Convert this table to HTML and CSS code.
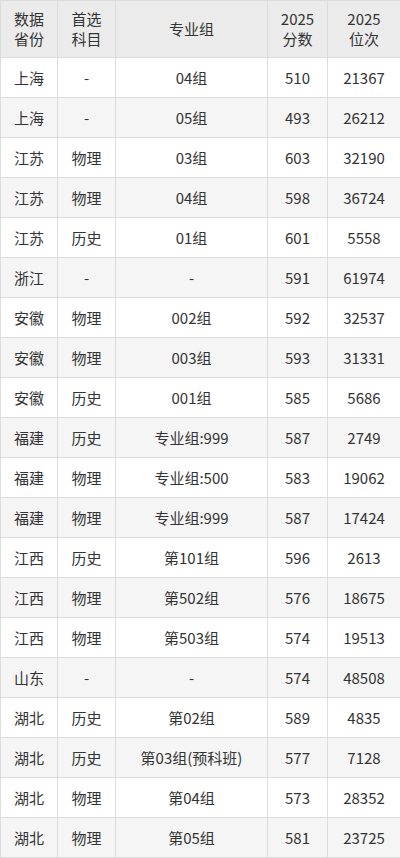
FILE: index.html
```html
<!DOCTYPE html>
<html lang="zh">
<head>
<meta charset="utf-8">
<link rel="stylesheet" href="styles.css">
</head>
<body>
<table class="score-table">
<colgroup>
<col class="c1"><col class="c2"><col class="c3"><col class="c4"><col class="c5">
</colgroup>
<thead>
<tr><th>数据<br>省份</th><th>首选<br>科目</th><th>专业组</th><th>2025<br>分数</th><th>2025<br>位次</th></tr>
</thead>
<tbody>
<tr><td>上海</td><td>-</td><td>04组</td><td>510</td><td>21367</td></tr>
<tr><td>上海</td><td>-</td><td>05组</td><td>493</td><td>26212</td></tr>
<tr><td>江苏</td><td>物理</td><td>03组</td><td>603</td><td>32190</td></tr>
<tr><td>江苏</td><td>物理</td><td>04组</td><td>598</td><td>36724</td></tr>
<tr><td>江苏</td><td>历史</td><td>01组</td><td>601</td><td>5558</td></tr>
<tr><td>浙江</td><td>-</td><td>-</td><td>591</td><td>61974</td></tr>
<tr><td>安徽</td><td>物理</td><td>002组</td><td>592</td><td>32537</td></tr>
<tr><td>安徽</td><td>物理</td><td>003组</td><td>593</td><td>31331</td></tr>
<tr><td>安徽</td><td>历史</td><td>001组</td><td>585</td><td>5686</td></tr>
<tr><td>福建</td><td>历史</td><td>专业组:999</td><td>587</td><td>2749</td></tr>
<tr><td>福建</td><td>物理</td><td>专业组:500</td><td>583</td><td>19062</td></tr>
<tr><td>福建</td><td>物理</td><td>专业组:999</td><td>587</td><td>17424</td></tr>
<tr><td>江西</td><td>历史</td><td>第101组</td><td>596</td><td>2613</td></tr>
<tr><td>江西</td><td>物理</td><td>第502组</td><td>576</td><td>18675</td></tr>
<tr><td>江西</td><td>物理</td><td>第503组</td><td>574</td><td>19513</td></tr>
<tr><td>山东</td><td>-</td><td>-</td><td>574</td><td>48508</td></tr>
<tr><td>湖北</td><td>历史</td><td>第02组</td><td>589</td><td>4835</td></tr>
<tr><td>湖北</td><td>历史</td><td>第03组(预科班)</td><td>577</td><td>7128</td></tr>
<tr><td>湖北</td><td>物理</td><td>第04组</td><td>573</td><td>28352</td></tr>
<tr><td>湖北</td><td>物理</td><td>第05组</td><td>581</td><td>23725</td></tr>
</tbody>
</table>
</body>
</html>
```
FILE: styles.css
```css
html, body {
  margin: 0;
  padding: 0;
  background: #ffffff;
}
.score-table {
  width: 400px;
  border-collapse: collapse;
  table-layout: fixed;
  font-family: "Noto Sans CJK SC", "Noto Sans", sans-serif;
  font-size: 15px;
  color: #333333;
}
.c1 { width: 57px; }
.c2 { width: 58px; }
.c3 { width: 152px; }
.c4 { width: 60px; }
.c5 { width: 73px; }
.score-table th,
.score-table td {
  border: 1px solid #dcdcdc;
  text-align: center;
  padding: 0;
  font-weight: normal;
}
.score-table th {
  background: #ebebeb;
  height: 56px;
  line-height: 20px;
}
.score-table td {
  height: 39px;
  line-height: 20px;
}
.score-table tbody tr:nth-child(even) td {
  background: #f5f5f5;
}
```
